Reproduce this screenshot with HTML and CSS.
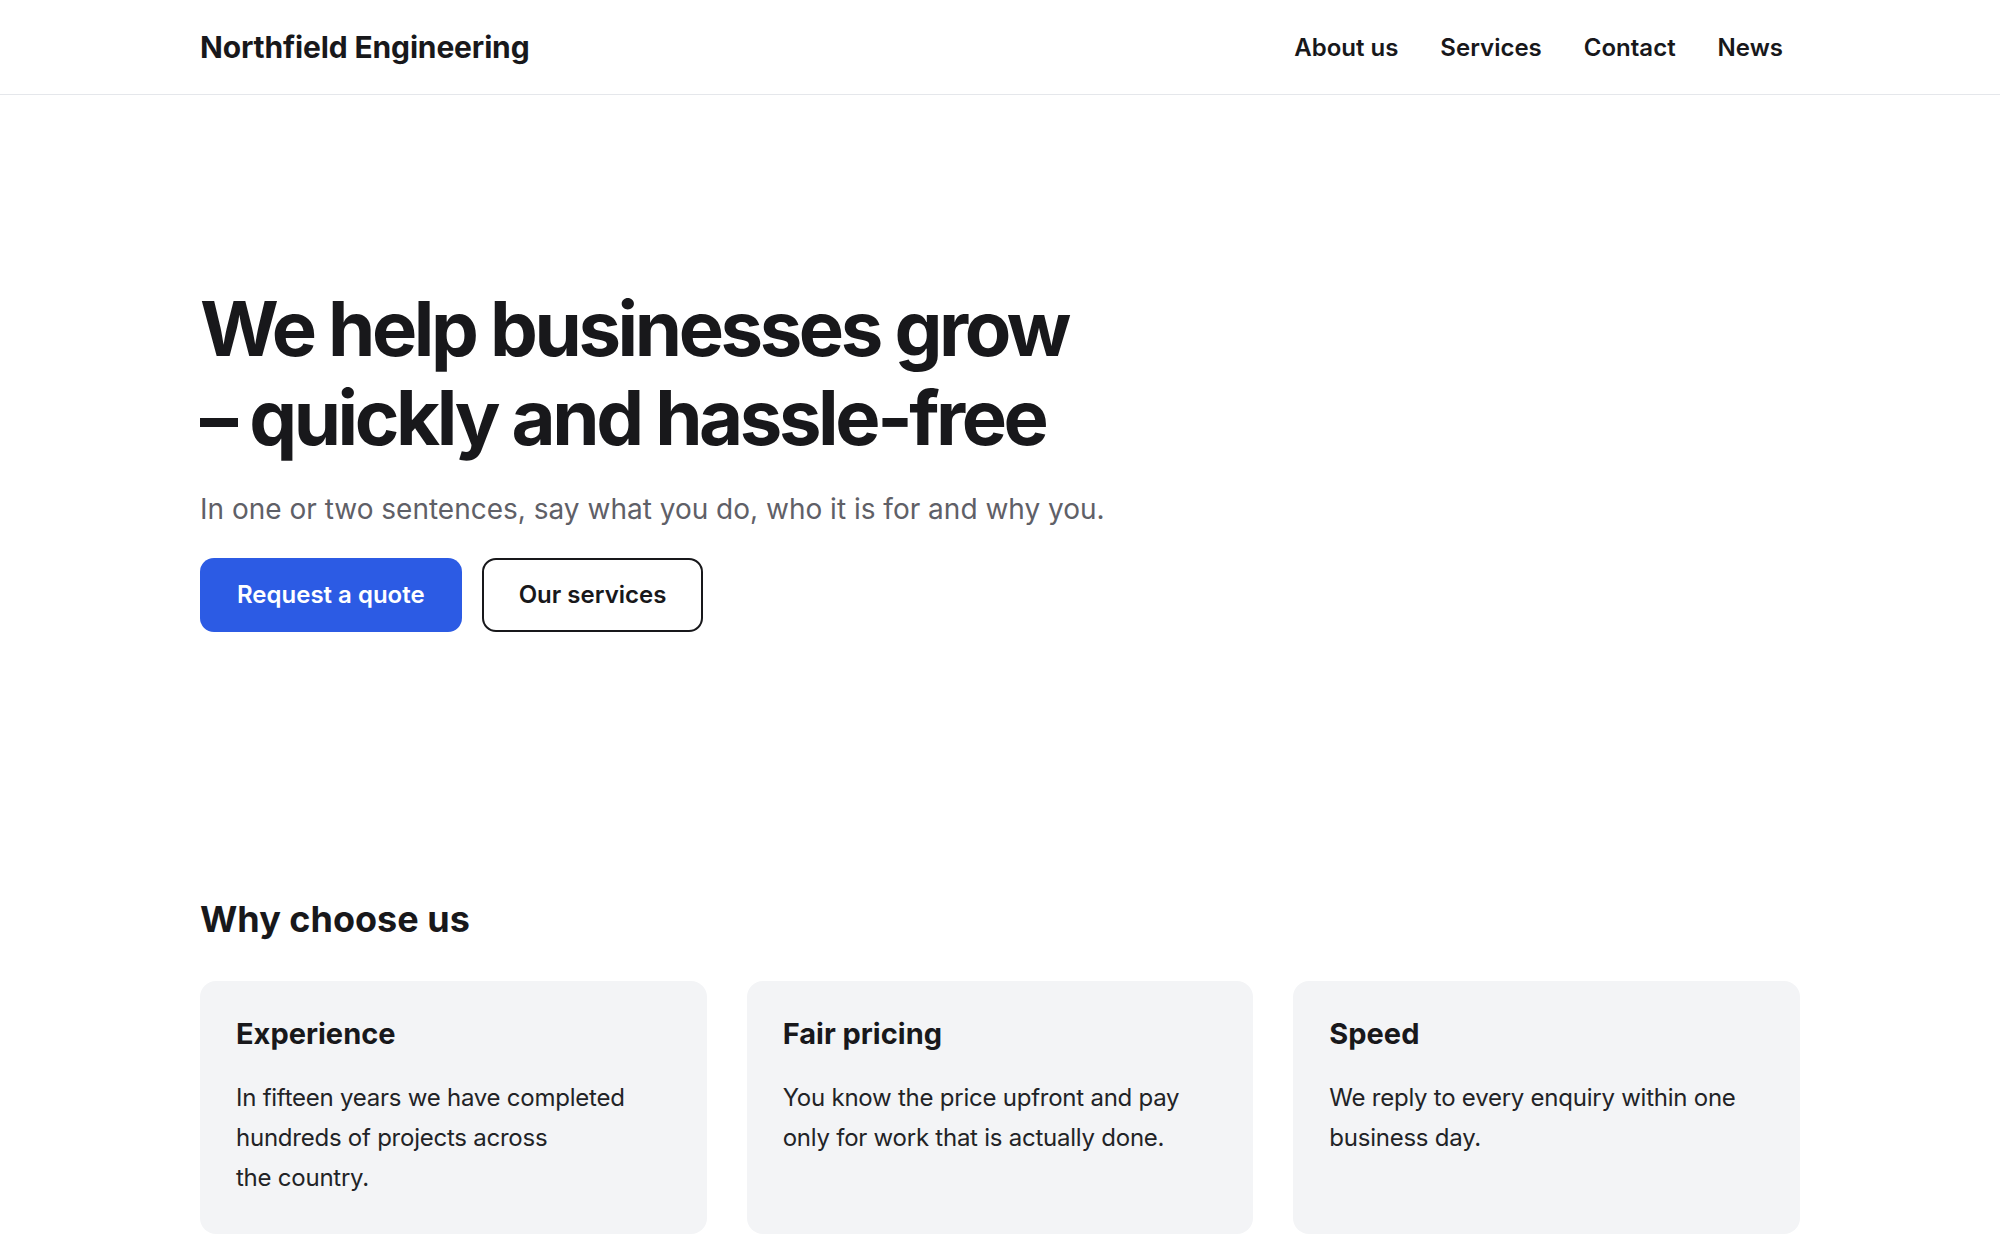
FILE: index.html
```html
<!DOCTYPE html>
<html lang="en">
<head>
    <meta charset="utf-8">
    <title>Northfield Engineering</title>
    <link rel="stylesheet" href="styles.css">
</head>
<body>
    <header class="site-header">
        <div class="container header-inner">
            <a href="#" class="logo">Northfield Engineering</a>
            <nav class="main-nav">
                <a href="#about">About us</a>
                <a href="#services">Services</a>
                <a href="#contact">Contact</a>
                <a href="#news">News</a>
            </nav>
        </div>
    </header>

    <section class="hero">
        <div class="container">
            <h1>We help businesses grow<br>– quickly and hassle-free</h1>
            <p class="lead">In one or two sentences, say what you do, who it is for and why you.</p>
            <div class="actions">
                <a href="#contact" class="btn btn-primary">Request a quote</a>
                <a href="#services" class="btn btn-outline">Our services</a>
            </div>
        </div>
    </section>

    <section class="features">
        <div class="container">
            <h2>Why choose us</h2>
            <div class="cards">
                <div class="card">
                    <h3>Experience</h3>
                    <p>In fifteen years we have completed hundreds of projects across the country.</p>
                </div>
                <div class="card">
                    <h3>Fair pricing</h3>
                    <p>You know the price upfront and pay only for work that is actually done.</p>
                </div>
                <div class="card">
                    <h3>Speed</h3>
                    <p>We reply to every enquiry within one business day.</p>
                </div>
            </div>
        </div>
    </section>
</body>
</html>
```

FILE: styles.css
```css
* {
    box-sizing: border-box;
}
body {
    margin: 0;
    font-family: Inter, "Noto Sans", Arial, sans-serif;
    color: #18181b;
    background: #fff;
}
a {
    color: inherit;
    text-decoration: none;
}
.container {
    max-width: 1600px;
    margin: 0 auto;
}

/* header */
.site-header {
    border-bottom: 1px solid #e5e7eb;
}
.header-inner {
    height: 94px;
    display: flex;
    align-items: center;
    justify-content: space-between;
}
.logo {
    font-size: 30px;
    font-weight: 700;
    letter-spacing: -0.005em;
}
.main-nav {
    display: flex;
    gap: 8px;
}
.main-nav a {
    font-size: 24px;
    font-weight: 600;
    padding: 8px 17px;
}

/* hero */
.hero {
    padding: 189px 0 136px;
}
.hero h1 {
    margin: 0 0 28px;
    font-size: 76px;
    line-height: 89px;
    font-weight: 700;
    letter-spacing: -0.045em;
}
.lead {
    margin: 0 0 30px;
    font-size: 28px;
    line-height: 38px;
    color: #5f6067;
}
.actions {
    display: flex;
    gap: 20px;
}
.btn {
    display: inline-block;
    padding: 20px 35px;
    font-size: 24px;
    line-height: 30px;
    font-weight: 600;
    border: 2px solid transparent;
    border-radius: 14px;
}
.btn-primary {
    background: #2c5be4;
    color: #fff;
}
.btn-outline {
    border-color: #18181b;
    color: #18181b;
}

/* features */
.features {
    padding-top: 130px;
}
.features h2 {
    margin: 0 0 40px;
    font-size: 36px;
    line-height: 1.2;
    font-weight: 700;
}
.cards {
    display: grid;
    grid-template-columns: repeat(3, 1fr);
    gap: 40px;
}
.card {
    background: #f3f4f6;
    border-radius: 16px;
    padding: 36px;
}
.card h3 {
    margin: 0 0 26px;
    font-size: 29px;
    line-height: 1.2;
    font-weight: 700;
}
.card p {
    margin: 0;
    font-size: 24px;
    line-height: 40px;
    letter-spacing: -0.01em;
    color: #222326;
    text-wrap: pretty;
}
```
